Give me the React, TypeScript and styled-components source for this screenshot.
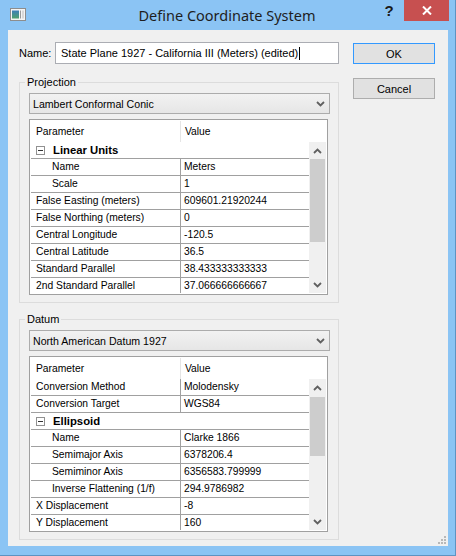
import React from "react";
import styled, { createGlobalStyle } from "styled-components";

const Global = createGlobalStyle`
  html, body { margin: 0; padding: 0; background: #8bc4f4; }
  body { font-family: "Liberation Sans", Arial, sans-serif; font-size: 11px; color: #000; }
  * { box-sizing: border-box; }
`;

const Window = styled.div`
  width: 456px;
  height: 556px;
  background: #8bc4f4;
  border-right: 1px solid #5e93c2;
  border-bottom: 1px solid #5e93c2;
  display: flex;
  flex-direction: column;
  position: relative;
`;

const TitleBar = styled.div`
  height: 30px;
  display: flex;
  align-items: flex-start;
`;

const AppIcon = styled.svg`
  margin: 8px 0 0 10px;
  flex: none;
`;

const Title = styled.div`
  flex: 1;
  text-align: center;
  font-family: "Noto Sans", "Open Sans", sans-serif;
  font-size: 14.5px;
  line-height: 31px;
  color: #1e1e1e;
  padding-left: 48px;
`;

const Help = styled.div`
  width: 18px;
  margin-top: 2px;
  font-family: "Liberation Sans", Arial, sans-serif;
  font-weight: bold;
  font-size: 15px;
  line-height: 18px;
  color: #1a1a1a;
  text-align: center;
  margin-right: 6px;
`;

const CloseBtn = styled.div`
  width: 45px;
  height: 21px;
  margin-right: 6px;
  background: #c75050;
  display: flex;
  align-items: center;
  justify-content: center;
`;

const Client = styled.div`
  margin: 0 7px 0 8px;
  height: 516px;
  background: #f0f0f0;
  display: flex;
  gap: 14px;
  padding: 12px 0 0 11px;
  position: relative;
`;

const LeftCol = styled.div`
  width: 320px;
  display: flex;
  flex-direction: column;
`;

const RightCol = styled.div`
  width: 82px;
  display: flex;
  flex-direction: column;
  gap: 14px;
  padding-top: 1px;
`;

const NameRow = styled.div`
  display: flex;
  align-items: center;
  height: 22px;
  gap: 5px;
`;

const NameLabel = styled.label`
  width: 31px;
  flex: none;
`;

const TextBox = styled.div`
  flex: 1;
  height: 22px;
  border: 1px solid #abadb3;
  background: #fff;
  padding-left: 5px;
  display: flex;
  align-items: center;
  white-space: nowrap;
`;

const Caret = styled.span`
  display: inline-block;
  width: 1px;
  height: 13px;
  background: #000;
  margin-left: 1px;
`;

const Button = styled.div<{ $default?: boolean }>`
  height: 21px;
  border: 1px solid ${(p) => (p.$default ? "#3399ff" : "#adadad")};
  background: #e1e1e1;
  display: flex;
  align-items: center;
  justify-content: center;
`;

const Group = styled.div<{ $top: number }>`
  margin-top: ${(p) => p.$top}px;
  border: 1px solid #dcdcdc;
  padding: 10px 8px 7px 9px;
  display: flex;
  flex-direction: column;
  gap: 5px;
  position: relative;
`;

const Legend = styled.div`
  position: absolute;
  top: -8px;
  left: 5px;
  padding: 0 2px;
  background: #f0f0f0;
  line-height: 14px;
`;

const Combo = styled.div`
  height: 21px;
  border: 1px solid #acacac;
  background: linear-gradient(#f2f2f2, #e6e6e6);
  display: flex;
  align-items: center;
  padding: 0 4px 0 3px;
  font-size: 10.6px;
`;

const ComboText = styled.span`
  flex: 1;
`;

const Table = styled.div<{ $h: number }>`
  height: ${(p) => p.$h}px;
  width: 299px;
  border: 1px solid #a0a0a0;
  padding: 1px;
  background: #fff;
  display: flex;
  flex-direction: column;
  font-size: 10.3px;
`;

const HeaderRow = styled.div`
  height: 21px;
  flex: none;
  display: grid;
  grid-template-columns: 150px 1fr;
  align-items: stretch;
`;

const HeaderCell = styled.div<{ $first?: boolean }>`
  display: flex;
  align-items: center;
  padding-left: ${(p) => (p.$first ? 5 : 4)}px;
  border-right: ${(p) => (p.$first ? "1px solid #e5e5e5" : "none")};
`;

const Body = styled.div`
  flex: 1;
  min-height: 0;
  display: flex;
  overflow: hidden;
`;

const Rows = styled.div`
  flex: 1;
  display: flex;
  flex-direction: column;
`;

const Row = styled.div`
  height: 17px;
  flex: none;
  display: grid;
  grid-template-columns: 150px 1fr;
`;

const Cell = styled.div<{ $indent?: boolean; $first?: boolean }>`
  border-bottom: 1px solid #a0a0a0;
  border-right: ${(p) => (p.$first ? "1px solid #a0a0a0" : "none")};
  padding-left: ${(p) => (p.$first ? (p.$indent ? 21 : 5) : 3)}px;
  line-height: 16px;
  white-space: nowrap;
  overflow: hidden;
`;

const CategoryRow = styled.div`
  height: 17px;
  flex: none;
  border-bottom: 1px solid #a0a0a0;
  display: flex;
  align-items: center;
  padding-left: 5px;
  gap: 8px;
  font-weight: bold;
  font-size: 11.3px;
`;

const ScrollBar = styled.div`
  width: 17px;
  flex: none;
  background: #f0f0f0;
  display: flex;
  flex-direction: column;
`;

const ScrollBtn = styled.div`
  height: 17px;
  flex: none;
  display: flex;
  align-items: center;
  justify-content: center;
`;

const Track = styled.div`
  flex: 1;
  display: flex;
  flex-direction: column;
`;

const Thumb = styled.div<{ $off: number; $h: number }>`
  margin: ${(p) => p.$off}px 1px 0 1px;
  height: ${(p) => p.$h}px;
  background: #cdcdcd;
`;

const Grip = styled.svg`
  position: absolute;
  right: 2px;
  bottom: 2px;
`;

const Chevron = ({ up }: { up?: boolean }) => (
  <svg width="9" height="6" viewBox="0 0 9 6">
    <polyline
      points={up ? "1,5 4.5,1.5 8,5" : "1,1 4.5,4.5 8,1"}
      fill="none"
      stroke="#606060"
      strokeWidth="1.8"
    />
  </svg>
);

const MinusBox = () => (
  <svg width="9" height="9" viewBox="0 0 9 9">
    <rect x="0.5" y="0.5" width="8" height="8" fill="#fff" stroke="#919191" />
    <line x1="2" y1="4.5" x2="7" y2="4.5" stroke="#333" />
  </svg>
);

type Item =
  | { kind: "cat"; label: string }
  | { kind: "row"; label: string; value: string; indent?: boolean };

const projRows: Item[] = [
  { kind: "cat", label: "Linear Units" },
  { kind: "row", label: "Name", value: "Meters", indent: true },
  { kind: "row", label: "Scale", value: "1", indent: true },
  { kind: "row", label: "False Easting (meters)", value: "609601.21920244" },
  { kind: "row", label: "False Northing (meters)", value: "0" },
  { kind: "row", label: "Central Longitude", value: "-120.5" },
  { kind: "row", label: "Central Latitude", value: "36.5" },
  { kind: "row", label: "Standard Parallel", value: "38.433333333333" },
  { kind: "row", label: "2nd Standard Parallel", value: "37.066666666667" },
];

const datumRows: Item[] = [
  { kind: "row", label: "Conversion Method", value: "Molodensky" },
  { kind: "row", label: "Conversion Target", value: "WGS84" },
  { kind: "cat", label: "Ellipsoid" },
  { kind: "row", label: "Name", value: "Clarke 1866", indent: true },
  { kind: "row", label: "Semimajor Axis", value: "6378206.4", indent: true },
  { kind: "row", label: "Semiminor Axis", value: "6356583.799999", indent: true },
  { kind: "row", label: "Inverse Flattening (1/f)", value: "294.9786982", indent: true },
  { kind: "row", label: "X Displacement", value: "-8" },
  { kind: "row", label: "Y Displacement", value: "160" },
];

const PropGrid = ({
  items,
  height,
  thumbOff,
  thumbH,
}: {
  items: Item[];
  height: number;
  thumbOff: number;
  thumbH: number;
}) => (
  <Table $h={height}>
    <HeaderRow>
      <HeaderCell $first>Parameter</HeaderCell>
      <HeaderCell>Value</HeaderCell>
    </HeaderRow>
    <Body>
      <Rows>
        {items.map((it, i) =>
          it.kind === "cat" ? (
            <CategoryRow key={i}>
              <MinusBox />
              <span>{it.label}</span>
            </CategoryRow>
          ) : (
            <Row key={i}>
              <Cell $first $indent={it.indent}>
                {it.label}
              </Cell>
              <Cell>{it.value}</Cell>
            </Row>
          )
        )}
      </Rows>
      <ScrollBar>
        <ScrollBtn>
          <Chevron up />
        </ScrollBtn>
        <Track>
          <Thumb $off={thumbOff} $h={thumbH} />
        </Track>
        <ScrollBtn>
          <Chevron />
        </ScrollBtn>
      </ScrollBar>
    </Body>
  </Table>
);

export default function App() {
  return (
    <>
      <Global />
      <Window>
        <TitleBar>
          <AppIcon width="16" height="13" viewBox="0 0 16 13">
            <defs>
              <linearGradient id="ig" x1="0" y1="0" x2="0" y2="1">
                <stop offset="0" stopColor="#3d7fb8" />
                <stop offset="1" stopColor="#4fa06e" />
              </linearGradient>
            </defs>
            <rect x="0.5" y="0.5" width="15" height="12" fill="#f4f4f4" stroke="#8d8d8d" />
            <rect x="2" y="2.5" width="7" height="8" fill="url(#ig)" />
            <rect x="10" y="2.5" width="1" height="8" fill="#9a9a9a" />
            <rect x="12" y="2.5" width="2" height="8" fill="#d8d8d8" />
          </AppIcon>
          <Title>Define Coordinate System</Title>
          <Help>?</Help>
          <CloseBtn>
            <svg width="10" height="9" viewBox="0 0 10 9">
              <path d="M1 0.5 L9 8.5 M9 0.5 L1 8.5" stroke="#fff" strokeWidth="2" />
            </svg>
          </CloseBtn>
        </TitleBar>
        <Client>
          <LeftCol>
            <NameRow>
              <NameLabel>Name:</NameLabel>
              <TextBox>
                State Plane 1927 - California III (Meters) (edited)
                <Caret />
              </TextBox>
            </NameRow>
            <Group $top={18}>
              <Legend>Projection</Legend>
              <Combo>
                <ComboText>Lambert Conformal Conic</ComboText>
                <Chevron />
              </Combo>
              <PropGrid items={projRows} height={176} thumbOff={0} thumbH={83} />
            </Group>
            <Group $top={16}>
              <Legend>Datum</Legend>
              <Combo>
                <ComboText>North American Datum 1927</ComboText>
                <Chevron />
              </Combo>
              <PropGrid items={datumRows} height={176} thumbOff={1} thumbH={59} />
            </Group>
          </LeftCol>
          <RightCol>
            <Button $default>OK</Button>
            <Button>Cancel</Button>
          </RightCol>
          <Grip width="8" height="8" viewBox="0 0 8 8">
            {[
              [6, 0],
              [6, 3],
              [3, 3],
              [6, 6],
              [3, 6],
              [0, 6],
            ].map(([x, y], i) => (
              <rect key={i} x={x} y={y} width="2" height="2" fill="#b8b8b8" />
            ))}
          </Grip>
        </Client>
      </Window>
    </>
  );
}
